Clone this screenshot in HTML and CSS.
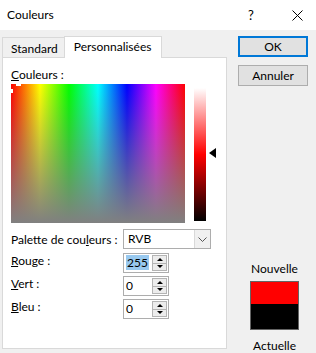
FILE: index.html
```html
<!DOCTYPE html>
<html lang="fr">
<head>
  <meta charset="UTF-8">
  <title>Couleurs</title>
  <link rel="stylesheet" href="styles.css">
</head>
<body>
  <div class="titlebar">
    <span class="title">Couleurs</span>
    <span class="help">?</span>
    <span class="close">
      <svg width="11" height="11" viewBox="0 0 11 11"><path d="M0.5 0.5 L10.5 10.5 M10.5 0.5 L0.5 10.5" stroke="#000" stroke-width="1" fill="none"/></svg>
    </span>
  </div>

  <div class="main">
    <div class="left">
      <div class="tabs">
        <div class="tab">Standard</div>
        <div class="tab active">Personnalisées</div>
      </div>
      <div class="panel">
        <div class="label"><u>C</u>ouleurs :</div>
        <div class="picker">
          <div class="spectrum">
            <span class="cross cross-a"></span>
            <span class="cross cross-b"></span>
          </div>
          <div class="lum"></div>
          <div class="lum-arrow"></div>
        </div>

        <div class="fields">
          <div class="flabel mid">Palette de cou<u>l</u>eurs :</div>
          <div class="select">
            <span class="select-text">RVB</span>
            <span class="select-btn">
              <svg width="9" height="5" viewBox="0 0 9 5"><path d="M0.5 0.5 L4.5 4.5 L8.5 0.5" stroke="#555" fill="none"/></svg>
            </span>
          </div>

          <div class="flabel"><u>R</u>ouge :</div>
          <div class="spin">
            <span class="spin-val"><span class="sel">255</span></span>
            <span class="spin-btns"><span class="sb"><i class="up"></i></span><span class="sb"><i class="down"></i></span></span>
          </div>

          <div class="flabel"><u>V</u>ert :</div>
          <div class="spin">
            <span class="spin-val">0</span>
            <span class="spin-btns"><span class="sb"><i class="up"></i></span><span class="sb"><i class="down"></i></span></span>
          </div>

          <div class="flabel"><u>B</u>leu :</div>
          <div class="spin">
            <span class="spin-val">0</span>
            <span class="spin-btns"><span class="sb"><i class="up"></i></span><span class="sb"><i class="down"></i></span></span>
          </div>
        </div>
      </div>
    </div>

    <div class="right">
      <button class="btn default">OK</button>
      <button class="btn">Annuler</button>
      <div class="preview">
        <div class="plabel">Nouvelle</div>
        <div class="swatch"><div class="new"></div><div class="cur"></div></div>
        <div class="plabel actual">Actuelle</div>
      </div>
    </div>
  </div>
</body>
</html>
```

FILE: styles.css
```css
* { box-sizing: border-box; margin: 0; padding: 0; }
body {
  width: 316px;
  height: 353px;
  overflow: hidden;
  background: #f0f0f0;
  color: #000;
  font-family: Lato, 'Noto Sans', sans-serif;
  font-size: 12px;
  line-height: 16px;
  white-space: nowrap;
}
u { text-decoration: underline; text-underline-offset: 1px; }

.titlebar {
  height: 30px;
  background: #fff;
  display: flex;
  align-items: center;
  padding-left: 7px;
}
.title { flex: 1; font-size: 12px; }
.help { font-size: 13px; width: 20px; margin-right: 24px; }
.close { width: 11px; height: 11px; margin-right: 13px; display: flex; }

.main {
  display: flex;
  padding-top: 6px;
}
.left {
  margin-left: 2px;
  width: 225px;
}
.tabs {
  display: flex;
  align-items: flex-end;
  height: 21px;
  position: relative;
  z-index: 1;
}
.tab {
  height: 20px;
  padding: 1px 6px 0 8px;
  border: 1px solid #d9d9d9;
  border-bottom: none;
  border-right: none;
  line-height: 19px;
  background: #f0f0f0;
}
.tab.active {
  height: 22px;
  margin-bottom: -1px;
  background: #fff;
  border-right: 1px solid #d9d9d9;
  padding: 0 10px 0 9px;
  line-height: 20px;
}
.panel {
  height: 292px;
  background: #fff;
  border: 1px solid #d9d9d9;
  padding: 9px 0 0 8px;
}
.label { margin-bottom: 1px; }

.picker {
  display: flex;
  align-items: flex-start;
}
.spectrum {
  position: relative;
  width: 174px;
  height: 139px;
  background:
    linear-gradient(to bottom, rgba(128,128,128,0), #808080),
    linear-gradient(to right, #f00, #ff0, #0f0, #0ff, #00f, #f0f, #f00);
}
.cross { position: absolute; background: #fff; }
.cross-a { left: 0; top: 5px; width: 2px; height: 4px; }
.cross-b { left: 5px; top: 0; width: 5px; height: 2px; }
.lum {
  margin-left: 9px;
  margin-top: 4px;
  width: 12px;
  height: 133px;
  background: linear-gradient(to bottom, #fff, #f00 50%, #000);
}
.lum-arrow {
  margin-left: 3px;
  margin-top: 64px;
  width: 0;
  height: 0;
  border-top: 5px solid transparent;
  border-bottom: 5px solid transparent;
  border-right: 7px solid #000;
}

.fields {
  display: grid;
  grid-template-columns: 112px auto;
  row-gap: 3px;
  margin-top: 6px;
  justify-items: start;
}
.flabel.mid { align-self: center; }
.select {
  margin-bottom: 1px;
  width: 88px;
  height: 20px;
  border: 1px solid #adadad;
  display: flex;
}
.select-text { flex: 1; padding-left: 4px; line-height: 18px; }
.select-btn {
  width: 16px;
  background: #f0f0f0;
  border-left: 1px solid #d9d9d9;
  display: flex;
  align-items: center;
  justify-content: center;
}

.spin {
  width: 46px;
  height: 20px;
  border: 1px solid #adadad;
  display: flex;
  background: #fff;
}
.spin-val { flex: 1; padding-left: 2px; line-height: 18px; }
.sel { background: #99c9ef; padding: 0 1px; }
.spin-btns {
  width: 15px;
  margin: 1px 1px 1px 0;
  display: flex;
  flex-direction: column;
  border: 1px solid #b4b4b4;
}
.sb {
  flex: 1;
  background: #ececec;
  display: flex;
  align-items: center;
  justify-content: center;
}
.sb + .sb { border-top: 1px solid #b4b4b4; }
.up, .down {
  width: 0;
  height: 0;
  border-left: 3px solid transparent;
  border-right: 3px solid transparent;
}
.up { border-bottom: 3px solid #000; }
.down { border-top: 3px solid #000; }

.right {
  margin-left: 11px;
  width: 70px;
  display: flex;
  flex-direction: column;
}
.btn {
  height: 21px;
  width: 70px;
  background: #e1e1e1;
  border: 1px solid #adadad;
  font: inherit;
  color: #000;
}
.btn.default { border: 2px solid #0078d7; margin-bottom: 8px; }
.preview {
  margin-top: 175px;
  margin-left: 3px;
  display: flex;
  flex-direction: column;
  align-items: center;
}
.swatch {
  margin-top: 4px;
  width: 49px;
  height: 49px;
  border: 1px solid #646464;
  display: flex;
  flex-direction: column;
}
.new { height: 22px; background: #f00; }
.cur { flex: 1; background: #000; }
.plabel.actual { margin-top: 8px; }
```
